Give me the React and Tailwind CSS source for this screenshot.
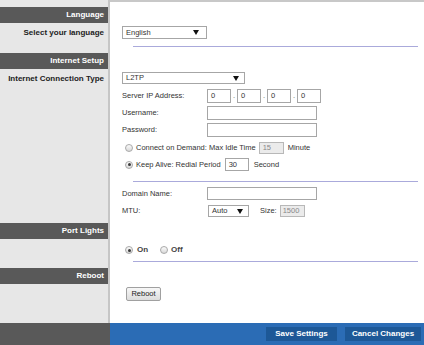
import React from "react";

const Arrow = () => (
  <svg width="6" height="5" viewBox="0 0 6 5">
    <polygon points="0,0 6,0 3,5" fill="#111" />
  </svg>
);

const Radio = ({ checked }) => (
  <span className="w-[8px] h-[8px] shrink-0 rounded-full border border-[#a9a9a9] bg-linear-to-b from-[#fcfcfc] to-[#d8d8d8] flex items-center justify-center">
    {checked && <span className="w-[3px] h-[3px] rounded-full bg-[#3a3a3a]" />}
  </span>
);

const Box = ({ className, children }) => (
  <div className={"border border-[#a6a6a6] bg-white flex items-center pl-[3px] " + className}>
    {children}
  </div>
);

const Dot = () => <span className="w-[6px] text-center text-[#666]">.</span>;

export default function App() {
  return (
    <div className="w-[424px] h-[345px] flex flex-col font-['Liberation_Sans',Arial,sans-serif] text-[7.5px] text-[#333] overflow-hidden">
      <div className="flex h-[323px]">
        {/* left column */}
        <div className="w-[110px] bg-[#e7e7e7] border-r-2 border-[#c6c6c6] pt-[7px] font-bold text-[8px]">
          <div className="h-[16px] bg-[#595959] text-white flex items-center justify-end pr-[4px]">Language</div>
          <div className="h-[14px] mt-[3px] flex items-center justify-end pr-[4px] text-[#222]">Select your language</div>
          <div className="h-[16px] mt-[13px] bg-[#595959] text-white flex items-center justify-end pr-[4px]">Internet Setup</div>
          <div className="h-[14px] mt-[3px] flex items-center justify-end pr-[4px] text-[#222]">Internet Connection Type</div>
          <div className="h-[16px] mt-[137px] bg-[#595959] text-white flex items-center justify-end pr-[4px]">Port Lights</div>
          <div className="h-[16px] mt-[29px] bg-[#595959] text-white flex items-center justify-end pr-[4px]">Reboot</div>
        </div>

        {/* main */}
        <div className="flex-1 bg-white border-t-2 border-[#c8c8c8] flex flex-col">
          <Box className="mt-[24px] ml-[12px] w-[85px] h-[13px] justify-between pr-[7px]">
            <span>English</span>
            <Arrow />
          </Box>
          <div className="h-[1px] mt-[7px] ml-[23px] mr-[6px] bg-[#aaaadb]"></div>

          <Box className="mt-[25px] ml-[12px] w-[123px] h-[12px] justify-between pr-[5px]">
            <span>L2TP</span>
            <Arrow />
          </Box>

          <div className="flex items-center h-[14px] mt-[5px] ml-[12px]">
            <span className="w-[85px]">Server IP Address:</span>
            <Box className="w-[24px] h-[14px]">0</Box>
            <Dot />
            <Box className="w-[24px] h-[14px]">0</Box>
            <Dot />
            <Box className="w-[24px] h-[14px]">0</Box>
            <Dot />
            <Box className="w-[24px] h-[14px]">0</Box>
          </div>
          <div className="flex items-center h-[14px] mt-[3px] ml-[12px]">
            <span className="w-[85px]">Username:</span>
            <Box className="w-[110px] h-[14px]"></Box>
          </div>
          <div className="flex items-center h-[14px] mt-[3px] ml-[12px]">
            <span className="w-[85px]">Password:</span>
            <Box className="w-[110px] h-[14px]"></Box>
          </div>

          <div className="flex items-center h-[12px] mt-[5px] ml-[15px]">
            <Radio />
            <span className="ml-[3px]">Connect on Demand: Max Idle Time</span>
            <div className="ml-[3px] w-[25px] h-[12px] border border-[#b8b8b8] bg-[#ebebeb] text-[#888] flex items-center pl-[3px]">15</div>
            <span className="ml-[4px]">Minute</span>
          </div>
          <div className="flex items-center h-[13px] mt-[4px] ml-[15px]">
            <Radio checked />
            <span className="ml-[3px]">Keep Alive: Redial Period</span>
            <Box className="ml-[4px] w-[24px] h-[13px]">30</Box>
            <span className="ml-[5px]">Second</span>
          </div>

          <div className="h-[1px] mt-[10px] ml-[23px] mr-[6px] bg-[#aaaadb]"></div>

          <div className="flex items-center h-[13px] mt-[5px] ml-[12px]">
            <span className="w-[85px]">Domain Name:</span>
            <Box className="w-[110px] h-[13px]"></Box>
          </div>
          <div className="flex items-center h-[12px] mt-[5px] ml-[12px]">
            <span className="w-[86px]">MTU:</span>
            <Box className="w-[41px] h-[12px] justify-between pr-[5px]">
              <span>Auto</span>
              <Arrow />
            </Box>
            <span className="ml-[11px]">Size:</span>
            <div className="ml-[3px] w-[25px] h-[12px] border border-[#b8b8b8] bg-[#ebebeb] text-[#888] flex items-center pl-[2px]">1500</div>
          </div>

          <div className="flex items-center h-[12px] mt-[27px] ml-[15px] font-bold text-[8px] text-[#444]">
            <Radio checked />
            <span className="ml-[4px]">On</span>
            <span className="ml-[12px]"><Radio /></span>
            <span className="ml-[3px]">Off</span>
          </div>
          <div className="h-[1px] mt-[5px] ml-[23px] mr-[6px] bg-[#aaaadb]"></div>

          <button className="mt-[25px] ml-[16px] w-[35px] h-[14px] border border-[#a0a0a0] rounded-[2px] bg-linear-to-b from-[#f7f7f7] to-[#dcdcdc] text-[7.5px] text-[#222] flex items-center justify-center">
            Reboot
          </button>
        </div>
      </div>

      {/* footer */}
      <div className="flex h-[22px]">
        <div className="w-[110px] bg-[#595959]"></div>
        <div className="flex-1 bg-[#2b6cb5] flex items-center justify-end gap-[8px] pr-[3px] font-bold text-[8px] text-white">
          <div className="w-[71px] h-[14px] bg-[#1d5897] flex items-center justify-center">Save Settings</div>
          <div className="w-[76px] h-[14px] bg-[#1d5897] flex items-center justify-center">Cancel Changes</div>
        </div>
      </div>
    </div>
  );
}
